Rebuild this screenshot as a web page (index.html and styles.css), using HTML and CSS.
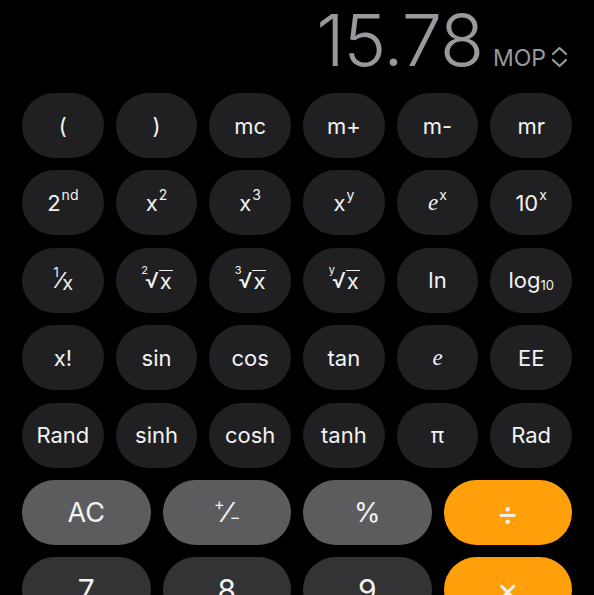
FILE: index.html
```html
<!DOCTYPE html>
<html lang="en">
<head>
  <meta charset="UTF-8" />
  <meta name="viewport" content="width=device-width, initial-scale=1.0" />
  <title>Calculator</title>
  <link rel="stylesheet" href="styles.css">
</head>
<body>
  <div class="display">
    <span class="value">15.78</span>
    <span class="unit">MOP</span>
    <svg class="chev" width="17" height="22" viewBox="0 0 17 22">
      <path d="M2 8 L8.5 2 L15 8 M2 14 L8.5 20 L15 14" fill="none" stroke="#98989d" stroke-width="2.2" stroke-linecap="round" stroke-linejoin="round"/>
    </svg>
  </div>

  <div class="keys sci">
    <button>(</button>
    <button>)</button>
    <button>mc</button>
    <button>m+</button>
    <button>m-</button>
    <button>mr</button>

    <button>2<sup>nd</sup></button>
    <button>x<sup>2</sup></button>
    <button>x<sup>3</sup></button>
    <button>x<sup>y</sup></button>
    <button><i class="e">e</i><sup>x</sup></button>
    <button>10<sup>x</sup></button>

    <button><sup class="one">1</sup>&frasl;<span class="den">x</span></button>
    <button><sup class="idx">2</sup>√<span class="rad">x</span></button>
    <button><sup class="idx">3</sup>√<span class="rad">x</span></button>
    <button><sup class="idx">y</sup>√<span class="rad">x</span></button>
    <button>ln</button>
    <button>log<sub>10</sub></button>

    <button>x!</button>
    <button>sin</button>
    <button>cos</button>
    <button>tan</button>
    <button><i class="e">e</i></button>
    <button>EE</button>

    <button>Rand</button>
    <button>sinh</button>
    <button>cosh</button>
    <button>tanh</button>
    <button>π</button>
    <button>Rad</button>
  </div>

  <div class="keys main">
    <button class="gray">AC</button>
    <button class="gray"><sup class="pm">+</sup>&frasl;<sub class="pm">−</sub></button>
    <button class="gray">%</button>
    <button class="op">÷</button>

    <button class="num">7</button>
    <button class="num">8</button>
    <button class="num">9</button>
    <button class="op">×</button>
  </div>
</body>
</html>
```

FILE: styles.css
```css
body { margin: 0; background: #000; font-family: Inter, "Noto Sans", sans-serif; color: #f2f2f2; overflow: hidden; height: 595px; }

.display { height: 80px; padding: 0 26px 0 22px; display: flex; justify-content: flex-end; align-items: baseline; box-sizing: border-box; }
.value { font-size: 72px; font-weight: 300; line-height: 80px; color: #98989d; letter-spacing: -1px; }
.unit { font-size: 23px; color: #98989d; margin-left: 10px; }
.chev { margin-left: 5px; align-self: flex-end; margin-bottom: 12px; }

.keys { display: grid; padding: 0 22px; column-gap: 12px; row-gap: 12.4px; grid-auto-rows: 65px; }
.sci { grid-template-columns: repeat(6, 1fr); margin-top: 13px; }
.main { grid-template-columns: repeat(4, 1fr); margin-top: 12.4px; }

button { border: none; border-radius: 33px; background: #202022; color: #f2f2f2; font-family: inherit; font-size: 22px; padding: 0; display: flex; align-items: center; justify-content: center; }
button sup { font-size: 14px; position: relative; top: -8px; vertical-align: baseline; margin-left: 1px; }
button sub { font-size: 13px; vertical-align: baseline; position: relative; top: 5px; }

.e { font-family: "Liberation Serif", serif; font-size: 23px; }
.one { margin-right: -1px; font-size: 13px; }
.den { font-size: 20px; position: relative; top: 3px; }
.idx { font-size: 11px; margin-right: -3px; top: -10px; }
.rad { border-top: 1.5px solid #f2f2f2; line-height: 20px; padding: 0 1px; }

.gray { background: #5c5c5f; font-size: 27px; }
.op { background: #ff9f0a; font-size: 34px; }
.num { background: #333335; font-size: 30px; }
.pm { font-size: 16px; }
```
